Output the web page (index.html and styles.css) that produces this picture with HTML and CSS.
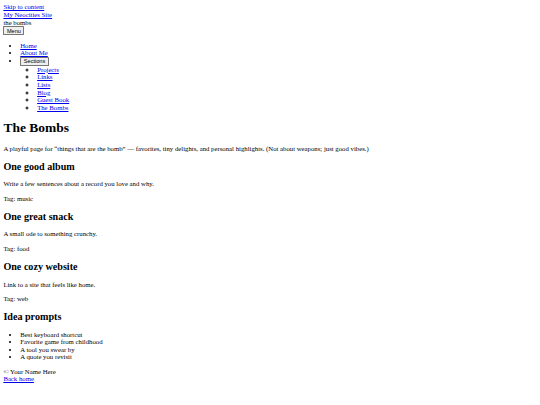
FILE: index.html
```html
<!DOCTYPE html>
<html lang="en">
<head>
<meta charset="utf-8">
<title>The Bombs</title>
<link rel="stylesheet" href="styles.css">
</head>
<body class="site">
<a href="#main">Skip to content</a>
<header class="site-header">
  <div><a href="#">My Neocities Site</a></div>
  <div>the bombs</div>
  <button class="btn" type="button">Menu</button>
  <nav>
    <ul class="list">
      <li><a href="#">Home</a></li>
      <li><a href="#">About Me</a></li>
      <li><button class="btn" type="button">Sections</button>
        <ul class="list sub">
          <li><a href="#">Projects</a></li>
          <li><a href="#">Links</a></li>
          <li><a href="#">Lists</a></li>
          <li><a href="#">Blog</a></li>
          <li><a href="#">Guest Book</a></li>
          <li><a href="#">The Bombs</a></li>
        </ul>
      </li>
    </ul>
  </nav>
</header>
<main id="main">
  <h1 class="title">The Bombs</h1>
  <p>A playful page for “things that are the bomb” — favorites, tiny delights, and personal highlights. (Not about weapons; just good vibes.)</p>
  <section>
    <h2 class="sect">One good album</h2>
    <p>Write a few sentences about a record you love and why.</p>
    <p>Tag: music</p>
  </section>
  <section>
    <h2 class="sect">One great snack</h2>
    <p>A small ode to something crunchy.</p>
    <p>Tag: food</p>
  </section>
  <section>
    <h2 class="sect">One cozy website</h2>
    <p>Link to a site that feels like home.</p>
    <p>Tag: web</p>
  </section>
  <section>
    <h2 class="sect">Idea prompts</h2>
    <ul class="list">
      <li>Best keyboard shortcut</li>
      <li>Favorite game from childhood</li>
      <li>A tool you swear by</li>
      <li>A quote you revisit</li>
    </ul>
  </section>
</main>
<footer>
  <div>© Your Name Here</div>
  <div><a href="#">Back home</a></div>
</footer>
</body>
</html>
```

FILE: styles.css
```css
.site {
  margin: 0.5em;
  font-family: "Liberation Serif", "Times New Roman", serif;
  font-size: 6.75px;
  line-height: 1.125;
  color: #000;
}

.site a {
  color: #0000ee;
}

.list {
  margin: 1em 0;
  padding-left: 2.5em;
}

.list.sub {
  margin: 0;
  list-style-type: circle;
}

.title {
  font-size: 2em;
  margin: 0.67em 0;
}

.sect {
  font-size: 1.5em;
  margin: 0.83em 0;
}

.btn {
  font-family: "Liberation Sans", Arial, sans-serif;
  font-size: 0.8333em;
  line-height: normal;
  padding: 0.075em 0.45em;
  border: 0.1em solid #767676;
  border-radius: 0.15em;
  background: #efefef;
  color: #000;
  margin: 0;
}
```
